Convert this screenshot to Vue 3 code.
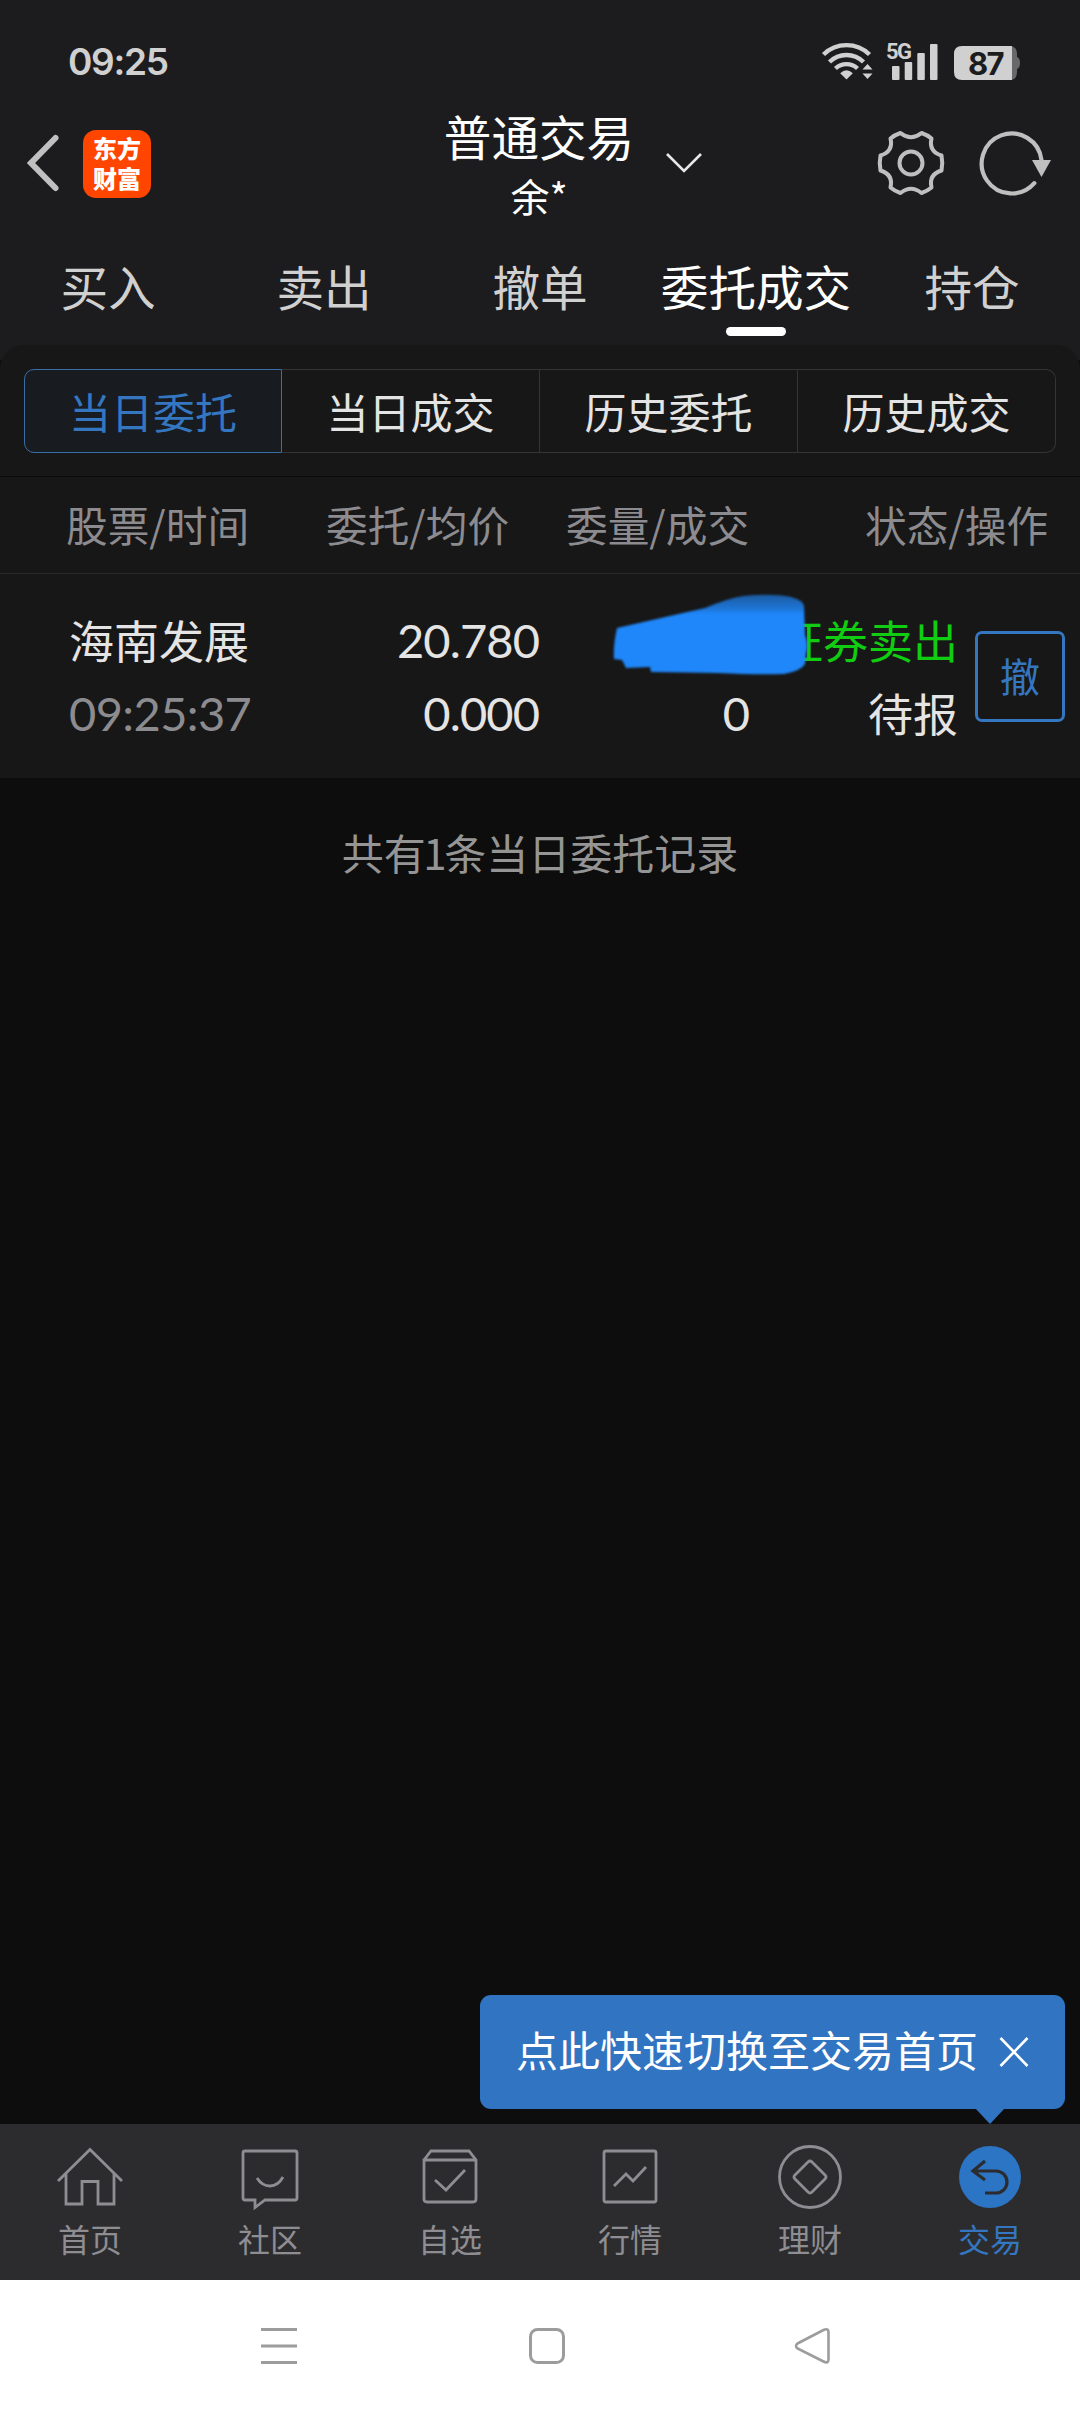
<template>
  <div class="app">
    <header class="top">
      <div class="status">
        <span class="clock">09:25</span>
        <div class="status-icons">
          <svg class="wifi" width="52" height="38" viewBox="0 0 52 38">
            <g fill="none" stroke="#d0d0d0" stroke-width="4.4">
              <path d="M1.5 12.500a33 33 0 0 1 46 0" />
              <path d="M7.500 20a24 24 0 0 1 34 0" />
              <path d="M13.500 26.500a16 16 0 0 1 22 0" />
            </g>
            <path d="M24.500 37.500l-6.300-6.200q6.300-6 12.600 0z" fill="#d0d0d0" />
            <path d="M45.500 22l5 5.500h-10zM40.500 31.500h10l-5 5.500z" fill="#d0d0d0" />
          </svg>
          <svg class="signal" width="54" height="38" viewBox="0 0 54 38">
            <text x="0" y="17" class="net">5G</text>
            <g fill="#d0d0d0">
              <rect x="6" y="24" width="7.500" height="14" rx="1" />
              <rect x="18.700" y="20" width="7.500" height="18" rx="1" />
              <rect x="31.300" y="11" width="7.500" height="27" rx="1" />
              <rect x="44" y="2" width="7.500" height="36" rx="1" />
            </g>
          </svg>
          <svg class="battery" width="68" height="34" viewBox="0 0 68 34">
            <path d="M56 0h1q6 1 6 8v3q3 1 3 6t-3 6v3q0 7-6 8h-1z" fill="#68686a" />
            <path d="M8 0h50v34h-50q-8 0-8-8v-18q0-8 8-8z" fill="#d0d0d0" />
            <text x="31.500" y="28.500" text-anchor="middle" class="level">87</text>
          </svg>
        </div>
      </div>

      <div class="title-bar">
        <div class="side left">
          <svg width="34" height="58" viewBox="0 0 34 58">
            <path d="M29.500 4L5 29l24.500 25" fill="none" stroke="#c0c0c0" stroke-width="6" stroke-linecap="round" />
          </svg>
          <div class="logo">东方财富</div>
        </div>
        <div class="account">
          <span class="account-type">普通交易</span>
          <span class="account-name">余*</span>
        </div>
        <svg class="caret" width="38" height="24" viewBox="0 0 38 24">
          <path d="M2 3l17 17L36 3" fill="none" stroke="#e8e8e8" stroke-width="2.600" />
        </svg>
        <div class="side right">
          <svg width="70" height="70" viewBox="-35 -35 70 70">
            <g fill="none" stroke="#bfbfbf" stroke-width="4" stroke-linejoin="round">
              <path d="M-10.500-30Q0-21.500 10.500-30Q16.500-28 20.500-24.500Q17.500-11.500 30.500-7.500Q32 0 30.500 7.500Q17.500 11.500 20.500 24.500Q16.500 28 10.500 30Q0 21.500-10.500 30Q-16.500 28-20.500 24.500Q-17.500 11.500-30.500 7.500Q-32 0-30.500-7.500Q-17.500-11.500-20.500-24.500Q-16.500-28-10.500-30Z" />
              <circle r="11.500" />
            </g>
          </svg>
          <svg width="76" height="70" viewBox="-35 -35 76 70">
            <path d="M22.300 20.200A30 30 0 1 1 29.500-3" fill="none" stroke="#bfbfbf" stroke-width="4.200" stroke-linecap="round" />
            <path d="M20-3h19l-9.500 17z" fill="#bfbfbf" />
          </svg>
        </div>
      </div>

      <nav class="tabs">
        <span v-for="tab in tabs" :key="tab" class="tab" :class="{ active: tab === '委托成交' }">{{ tab }}</span>
      </nav>
    </header>

    <main class="content">
      <section class="panel">
        <div class="segments">
          <span v-for="(seg, index) in segments" :key="seg" class="segment" :class="{ active: index === 0 }">{{ seg }}</span>
        </div>
        <div class="columns">
          <span v-for="col in columns" :key="col">{{ col }}</span>
        </div>
        <div class="order">
          <div class="cell name">
            <span>{{ order.name }}</span>
            <span class="muted num">{{ order.time }}</span>
          </div>
          <div class="cell price num">
            <span>{{ order.price }}</span>
            <span>{{ order.average }}</span>
          </div>
          <div class="cell amount num">
            <span>&nbsp;</span>
            <span>{{ order.filled }}</span>
          </div>
          <div class="cell state">
            <span class="sell">{{ order.side }}</span>
            <span>{{ order.state }}</span>
          </div>
          <button class="cancel">撤</button>
          <!-- marker scribble that hides the quantity -->
          <svg class="scribble" width="204" height="90" viewBox="0 0 204 90">
            <defs>
              <linearGradient id="ink" x1="0" y1="0" x2="0" y2="1">
                <stop offset="0" stop-color="#1f87fa" stop-opacity=".6" />
                <stop offset=".18" stop-color="#1f87fa" stop-opacity=".85" />
                <stop offset=".24" stop-color="#1f87fa" />
              </linearGradient>
            </defs>
            <path d="M10 36L98 16Q122 6 136 4Q166 1 184 5Q196 8 197 14L198 43Q202 52 199 62L198 72Q194 79 177 82Q150 83 110 81L44 80L43 75L19 76L15 68L7 67Q6 54 10 36Z" fill="url(#ink)" />
          </svg>
        </div>
      </section>
      <p class="summary">共有<span>{{ total }}</span>条当日委托记录</p>
      <div class="tip">
        <span>点此快速切换至交易首页</span>
        <svg width="30" height="32" viewBox="0 0 30 32">
          <path d="M1.500 2l27 28M28.500 2l-27 28" fill="none" stroke="#fff" stroke-width="2.600" />
        </svg>
      </div>
    </main>

    <footer class="tabbar">
      <div v-for="item in menu" :key="item.label" class="menu-item" :class="{ active: item.active }">
        <svg width="70" height="70" viewBox="-35 -35 70 70">
          <circle v-if="item.active" r="31" />
          <circle v-if="item.round" r="30.500" />
          <path :d="item.path" />
        </svg>
        <span>{{ item.label }}</span>
      </div>
    </footer>

    <div class="system-nav">
      <svg width="36" height="36" viewBox="0 0 36 36">
        <path d="M0 1.500h36M0 18h36M0 34.500h36" />
      </svg>
      <svg width="36" height="36" viewBox="0 0 36 36">
        <rect x="1.500" y="1.500" width="33" height="33" rx="7" />
      </svg>
      <svg width="36" height="36" viewBox="0 0 36 36">
        <path d="M2.500 15.500L28.500 2Q33.500 0 33.500 4V31.500Q33.500 36 28.500 33.500L2.500 20.500Q-.500 18 2.500 15.500Z" stroke-width="2.600" />
      </svg>
    </div>
  </div>
</template>

<script setup>
import { ref, reactive } from 'vue'

const tabs = ['买入', '卖出', '撤单', '委托成交', '持仓']
const segments = ['当日委托', '当日成交', '历史委托', '历史成交']
const columns = ['股票/时间', '委托/均价', '委量/成交', '状态/操作']

const total = ref(1)
const order = reactive({
  name: '海南发展',
  time: '09:25:37',
  price: '20.780',
  average: '0.000',
  filled: '0',
  side: '证券卖出',
  state: '待报'
})

// icon paths are drawn around 0,0
const menu = [
  { label: '首页', path: 'M-32 4L0-27.500L32 4M-24-4V27H-8V4.500H8V27H24V-4' },
  { label: '社区', path: 'M-25-26H25Q27-26 27-24V21Q27 23 25 23H-5L-15 30.500V23H-25Q-27 23-27 21V-24Q-27-26-25-26ZM-13 1Q-8 9 0 9T13 0' },
  { label: '自选', path: 'M-26-17L-19-26H19L26-17V22Q26 25 23 25H-23Q-26 25-26 22V-17H26M-15 3L-4 13L15-7' },
  { label: '行情', path: 'M-24-26H24Q26-26 26-24V23Q26 25 24 25H-24Q-26 25-26 23V-24Q-26-26-24-26ZM-16 9L-4-3L3 4L16-10' },
  { label: '理财', round: true, path: 'M-2-15Q0-17 2-15L15-2Q17 0 15 2L2 15Q0 17-2 15L-15 2Q-17 0-15-2Z' },
  { label: '交易', active: true, path: 'M-5-16L-17-6L-5 3M-17-6H6A11 11 0 0 1 6 16H-5' }
]
</script>

<style>
body {
  background: #0d0d0d;
}
</style>

<style scoped>
.app {
  width: 1080px;
  height: 2412px;
  display: flex;
  flex-direction: column;
  overflow: hidden;
  background: #0d0d0d;
  color: #e4e4e4;
  font-family: "Noto Sans CJK SC", sans-serif;
}

svg {
  display: block;
  flex: none;
  overflow: visible;
}

.top {
  height: 360px;
  background: #1c1c1e;
}

.status {
  height: 121px;
  padding: 0 58px 0 68px;
  display: flex;
  justify-content: space-between;
}

.clock {
  margin-top: 39px;
  font: 600 37px/46px Inter, sans-serif;
  letter-spacing: -1.3px;
  color: #d0d0d0;
}

.status-icons {
  display: flex;
  align-items: flex-start;
  padding-top: 42px;
}

.signal {
  margin-left: 12px;
}

.battery {
  margin: 4px 0 0 14px;
}

.net {
  font: 700 22px Roboto, sans-serif;
  letter-spacing: -1.500px;
  fill: #d0d0d0;
}

.level {
  font: 700 31px Inter, sans-serif;
  letter-spacing: -1.500px;
  fill: #1c1c1e;
}

.title-bar {
  height: 120px;
  display: flex;
}

.side {
  display: flex;
}

.side.left {
  flex: none;
  width: 420px;
  box-sizing: border-box;
  padding: 13px 0 0 26px;
}

.side.right {
  margin-left: auto;
  margin-right: 27px;
  padding-top: 7px;
  gap: 31px;
}

.logo {
  width: 68px;
  height: 68px;
  margin: -4px 0 0 23px;
  padding: 3px 10px 0;
  box-sizing: border-box;
  border-radius: 13px;
  background: #ff4500;
  font-size: 24px;
  font-weight: 900;
  line-height: 30px;
  color: #fff;
}

.account {
  width: 240px;
  margin-left: -1px;
  display: flex;
  flex-direction: column;
  align-items: center;
  color: #fff;
  white-space: nowrap;
}

.account-type {
  margin-top: -15px;
  font-size: 47.600px;
  line-height: 60px;
}

.account-name {
  margin-top: 4px;
  font-size: 39px;
  line-height: 50px;
}

.caret {
  margin: 30px 0 0 6px;
}

.tabs {
  display: grid;
  grid-template-columns: repeat(5, 216px);
  height: 104px;
}

.tab {
  display: flex;
  flex-direction: column;
  align-items: center;
  padding-top: 13px;
  font-size: 47.600px;
  line-height: 64px;
  color: #d0d0d0;
}

.tab.active {
  color: #fff;
}

.tab.active::after {
  content: "";
  width: 60px;
  height: 9px;
  margin-top: 9px;
  border-radius: 5px;
  background: #fff;
}

.content {
  position: relative;
  height: 1764px;
}

.panel {
  position: relative;
  margin-top: -15px;
  border-radius: 24px 24px 0 0;
  background: #171717;
}

.segments {
  display: grid;
  grid-template-columns: repeat(4, 258px);
  height: 132px;
  box-sizing: border-box;
  padding: 24px 24px 23px;
  border-bottom: 1px solid #0b0b0b;
}

.segment {
  border: 1px solid #343434;
  border-left-width: 0;
  text-align: center;
  font-size: 42px;
  line-height: 81px;
}

.segment:last-child {
  border-radius: 0 10px 10px 0;
}

.segment.active {
  border: 1px solid #3a6ea8;
  border-radius: 10px 0 0 10px;
  background: #181c21;
  color: #3476c0;
}

.columns {
  display: grid;
  grid-template-columns: 260px 240px 299px auto;
  height: 97px;
  box-sizing: border-box;
  padding-left: 66px;
  border-bottom: 1px solid #2a2a2a;
  font-size: 41.700px;
  line-height: 95px;
  color: #8c8b90;
}

.order {
  position: relative;
  display: flex;
  height: 204px;
  padding-left: 69px;
}

.cell {
  display: flex;
  flex-direction: column;
  flex: none;
  padding-top: 29px;
  box-sizing: border-box;
  font-size: 45px;
  line-height: 73px;
  white-space: nowrap;
}

.cell span {
  height: 73px;
}

.name {
  width: 231px;
}

.price {
  width: 239px;
  align-items: flex-end;
}

.amount {
  width: 210px;
  align-items: flex-end;
}

.state {
  width: 209px;
  align-items: flex-end;
}

.num {
  font-family: Lato, sans-serif;
  font-size: 47px;
  line-height: 75px;
  letter-spacing: -0.9px;
}

.muted {
  color: #8c8b90;
  letter-spacing: -0.6px;
}

.sell {
  color: #11cd11;
}

.cancel {
  width: 90px;
  height: 91px;
  margin: 57px 0 0 17px;
  padding: 0 0 3px;
  border: 3px solid #3476c0;
  border-radius: 7px;
  background: none;
  color: #3476c0;
  font: 40px/76px "Noto Sans CJK SC", sans-serif;
}

.scribble {
  position: absolute;
  left: 607px;
  top: 18px;
  filter: blur(1.2px);
}

.summary {
  margin: 44px 0 0;
  text-align: center;
  font-size: 42px;
  line-height: 60px;
  color: #959595;
}

.summary span {
  margin: 0 -2.500px;
}

.tip {
  position: absolute;
  right: 15px;
  bottom: 15px;
  width: 585px;
  height: 114px;
  box-sizing: border-box;
  padding: 0 36px;
  display: flex;
  align-items: center;
  justify-content: space-between;
  border-radius: 11px;
  background: #3174c1;
  color: #fff;
  font-size: 42px;
  line-height: 60px;
}

.tip span {
  margin-top: -6px;
  white-space: nowrap;
}

.tip::after {
  content: "";
  position: absolute;
  top: 113px;
  right: 60px;
  border: 15px solid transparent;
  border-top: 16px solid #3174c1;
  border-bottom: 0;
}

.tabbar {
  display: grid;
  grid-template-columns: repeat(6, 180px);
  height: 156px;
  background: #2c2c2e;
}

.menu-item {
  display: flex;
  flex-direction: column;
  align-items: center;
  padding-top: 18px;
  font-size: 32px;
  line-height: 40px;
  color: #8e8d92;
}

.menu-item svg {
  fill: none;
  stroke: currentColor;
  stroke-width: 2.800;
}

.menu-item span {
  margin-top: 6px;
}

.menu-item.active {
  color: #3476c0;
}

.menu-item.active circle {
  fill: #2c74c4;
  stroke: none;
}

.menu-item.active path {
  stroke: #2c2c2e;
  stroke-width: 3.200;
}

.system-nav {
  display: flex;
  gap: 231px;
  height: 132px;
  box-sizing: border-box;
  padding: 48px 0 0 261px;
  background: #fff;
}

.system-nav svg {
  fill: none;
  stroke: #9c9c9c;
  stroke-width: 3;
}

.system-nav svg:nth-child(2) {
  margin: 0 -1px 0 1px;
}
</style>
